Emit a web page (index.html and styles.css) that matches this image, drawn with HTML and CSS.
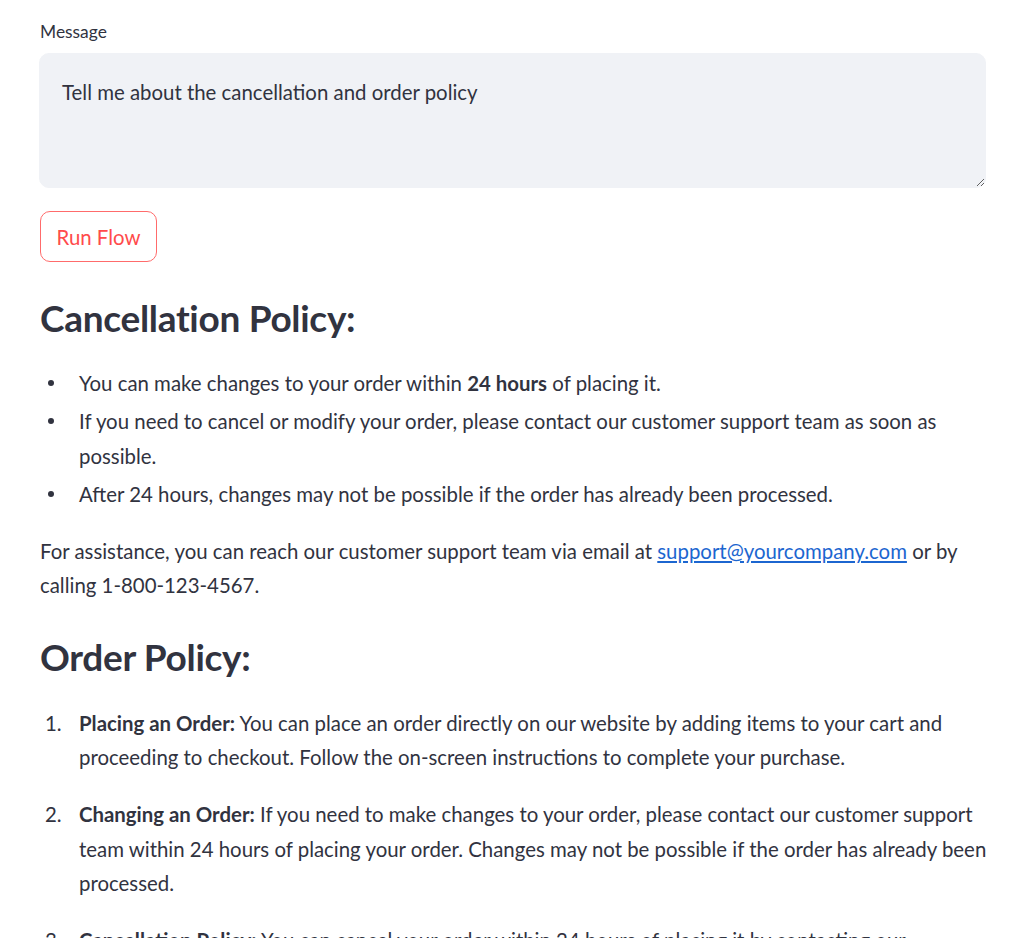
FILE: index.html
```html
<!DOCTYPE html>
<html lang="en">
<head>
<meta charset="utf-8">
<title>Run Flow</title>
<link rel="stylesheet" href="styles.css">
</head>
<body>
<main class="main">
  <label class="field-label" for="msg">Message</label>
  <textarea id="msg" class="message-box">Tell me about the cancellation and order policy</textarea>
  <button class="run-btn" type="button">Run Flow</button>

  <div class="markdown">
    <h3 class="section-title">Cancellation Policy:</h3>
    <ul class="bullets">
      <li>You can make changes to your order within <strong>24 hours</strong> of placing it.</li>
      <li>If you need to cancel or modify your order, please contact our customer support team as soon as possible.</li>
      <li>After 24 hours, changes may not be possible if the order has already been processed.</li>
    </ul>
    <p class="para">For assistance, you can reach our customer support team via email at <a href="#" class="link">support@yourcompany.com</a> or by calling 1-800-123-4567.</p>

    <h3 class="section-title">Order Policy:</h3>
    <ol class="steps">
      <li><p><strong>Placing an Order:</strong> You can place an order directly on our website by adding items to your cart and proceeding to checkout. Follow the on-screen instructions to complete your purchase.</p></li>
      <li><p><strong>Changing an Order:</strong> If you need to make changes to your order, please contact our customer support team within 24 hours of placing your order. Changes may not be possible if the order has already been processed.</p></li>
      <li><p><strong>Cancellation Policy:</strong> You can cancel your order within 24 hours of placing it by contacting our customer support team.</p></li>
    </ol>
  </div>
</main>
</body>
</html>
```

FILE: styles.css
```css
html, body {
  margin: 0;
  padding: 0;
  background: #ffffff;
}

body {
  font-family: "Lato", "Liberation Sans", sans-serif;
  color: #31333f;
  font-size: 20.4px;
  line-height: 34.5px;
}

.main {
  width: 950px;
  padding: 18px 34px 0 40px;
  display: flex;
  flex-direction: column;
  align-items: flex-start;
}

.field-label {
  font-size: 17.4px;
  line-height: 28px;
  margin-bottom: 7px;
}

.message-box {
  box-sizing: border-box;
  width: 947px;
  height: 135px;
  margin-left: -1px;
  padding: 21px 22px;
  border: 1px solid #f0f2f6;
  border-radius: 10px;
  background: #f0f2f6;
  color: #31333f;
  font-family: inherit;
  font-size: 20.4px;
  line-height: 34.5px;
  resize: vertical;
  outline: none;
}

.run-btn {
  margin-top: 23px;
  box-sizing: border-box;
  width: 117px;
  height: 51px;
  border: 1px solid #ff6b6b;
  border-radius: 10px;
  background: #ffffff;
  color: #ff4b4b;
  font-family: inherit;
  font-size: 20.4px;
  padding: 0;
}

.markdown {
  width: 950px;
  margin-top: 34px;
}

.section-title {
  font-size: 37px;
  font-weight: 700;
  line-height: 44.4px;
  margin: 0 0 26px 0;
  letter-spacing: -0.3px;
}

.bullets {
  list-style: none;
  margin: 0 0 22.5px 0;
  padding: 0;
}

.bullets li {
  position: relative;
  padding-left: 39px;
  margin-bottom: 3.5px;
}

.bullets li::before {
  content: "";
  position: absolute;
  left: 8px;
  top: 14px;
  width: 6px;
  height: 6px;
  border-radius: 50%;
  background: #31333f;
}

.para {
  margin: 0 0 32.5px 0;
}

.link {
  color: #1c66d0;
  text-decoration: underline;
}

.steps {
  list-style: none;
  margin: 0;
  padding: 0;
  counter-reset: step;
}

.steps li {
  position: relative;
  padding-left: 39px;
  counter-increment: step;
}

.steps li::before {
  content: counter(step) ".";
  position: absolute;
  left: 5px;
  top: 0;
}

.steps li p {
  margin: 0 0 22.5px 0;
}

strong {
  font-weight: 700;
}
```
